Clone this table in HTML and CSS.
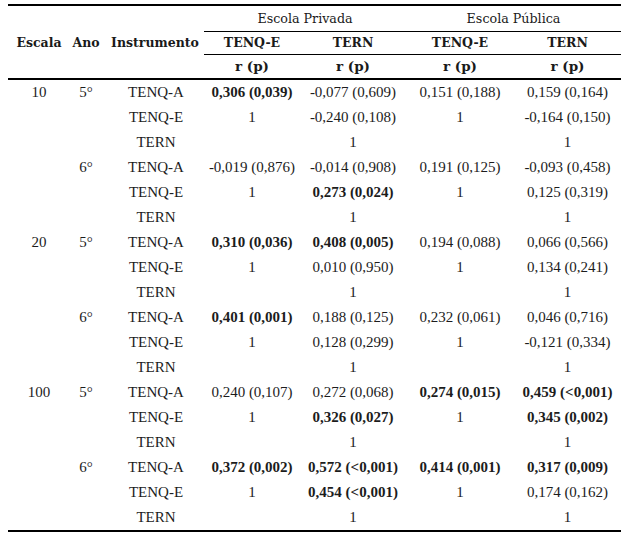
FILE: index.html
```html
<!DOCTYPE html>
<html lang="pt">
<head>
<meta charset="utf-8">
<title>Correlações</title>
<link rel="stylesheet" href="styles.css">
</head>
<body>
<table class="corr">
  <colgroup>
    <col class="c-escala"><col class="c-ano"><col class="c-inst">
    <col class="c-v1"><col class="c-v2"><col class="c-v3"><col class="c-v4">
  </colgroup>
  <thead>
    <tr class="h1">
      <th rowspan="3" class="side">Escala</th>
      <th rowspan="3" class="side">Ano</th>
      <th rowspan="3" class="side inst">Instrumento</th>
      <th colspan="2" class="grp">Escola Privada</th>
      <th colspan="2" class="grp">Escola Pública</th>
    </tr>
    <tr class="h2">
      <th class="sub">TENQ-E</th><th class="sub">TERN</th>
      <th class="sub">TENQ-E</th><th class="sub">TERN</th>
    </tr>
    <tr class="h3">
      <th class="rp">r (p)</th><th class="rp">r (p)</th>
      <th class="rp">r (p)</th><th class="rp">r (p)</th>
    </tr>
  </thead>
  <tbody>
    <tr><td>10</td><td>5°</td><td class="inst">TENQ-A</td><td class="b">0,306 (0,039)</td><td>-0,077 (0,609)</td><td>0,151 (0,188)</td><td>0,159 (0,164)</td></tr>
    <tr><td></td><td></td><td class="inst">TENQ-E</td><td>1</td><td>-0,240 (0,108)</td><td>1</td><td>-0,164 (0,150)</td></tr>
    <tr><td></td><td></td><td class="inst">TERN</td><td></td><td>1</td><td></td><td>1</td></tr>
    <tr><td></td><td>6°</td><td class="inst">TENQ-A</td><td>-0,019 (0,876)</td><td>-0,014 (0,908)</td><td>0,191 (0,125)</td><td>-0,093 (0,458)</td></tr>
    <tr><td></td><td></td><td class="inst">TENQ-E</td><td>1</td><td class="b">0,273 (0,024)</td><td>1</td><td>0,125 (0,319)</td></tr>
    <tr><td></td><td></td><td class="inst">TERN</td><td></td><td>1</td><td></td><td>1</td></tr>
    <tr><td>20</td><td>5°</td><td class="inst">TENQ-A</td><td class="b">0,310 (0,036)</td><td class="b">0,408 (0,005)</td><td>0,194 (0,088)</td><td>0,066 (0,566)</td></tr>
    <tr><td></td><td></td><td class="inst">TENQ-E</td><td>1</td><td>0,010 (0,950)</td><td>1</td><td>0,134 (0,241)</td></tr>
    <tr><td></td><td></td><td class="inst">TERN</td><td></td><td>1</td><td></td><td>1</td></tr>
    <tr><td></td><td>6°</td><td class="inst">TENQ-A</td><td class="b">0,401 (0,001)</td><td>0,188 (0,125)</td><td>0,232 (0,061)</td><td>0,046 (0,716)</td></tr>
    <tr><td></td><td></td><td class="inst">TENQ-E</td><td>1</td><td>0,128 (0,299)</td><td>1</td><td>-0,121 (0,334)</td></tr>
    <tr><td></td><td></td><td class="inst">TERN</td><td></td><td>1</td><td></td><td>1</td></tr>
    <tr><td>100</td><td>5°</td><td class="inst">TENQ-A</td><td>0,240 (0,107)</td><td>0,272 (0,068)</td><td class="b">0,274 (0,015)</td><td class="b">0,459 (&lt;0,001)</td></tr>
    <tr><td></td><td></td><td class="inst">TENQ-E</td><td>1</td><td class="b">0,326 (0,027)</td><td>1</td><td class="b">0,345 (0,002)</td></tr>
    <tr><td></td><td></td><td class="inst">TERN</td><td></td><td>1</td><td></td><td>1</td></tr>
    <tr><td></td><td>6°</td><td class="inst">TENQ-A</td><td class="b">0,372 (0,002)</td><td class="b">0,572 (&lt;0,001)</td><td class="b">0,414 (0,001)</td><td class="b">0,317 (0,009)</td></tr>
    <tr><td></td><td></td><td class="inst">TENQ-E</td><td>1</td><td class="b">0,454 (&lt;0,001)</td><td>1</td><td>0,174 (0,162)</td></tr>
    <tr><td></td><td></td><td class="inst">TERN</td><td></td><td>1</td><td></td><td>1</td></tr>
  </tbody>
</table>
</body>
</html>
```

FILE: styles.css
```css
html, body {
  background: #ffffff;
}
body {
  margin: 4px 7px 0 8px;
  font-family: "Liberation Serif", "Times New Roman", serif;
  color: #1c1c1c;
}
.corr {
  width: 613px;
  table-layout: fixed;
  border-collapse: collapse;
  border-top: 2px solid #000;
  border-bottom: 2px solid #000;
}
.c-escala { width: 62px; }
.c-ano { width: 32px; }
.c-inst { width: 102px; }
.c-v1 { width: 96px; }
.c-v2 { width: 106px; }
.c-v3 { width: 108px; }
.c-v4 { width: 107px; }

.corr th {
  font-family: "DejaVu Serif", serif;
  font-size: 12.5px;
  font-weight: normal;
  color: #1a1a1a;
  padding: 0;
  text-align: center;
  vertical-align: middle;
  white-space: nowrap;
}
.corr th.side {
  font-weight: bold;
  border-bottom: 2px solid #000;
}
.corr th.inst {
  padding-left: 4px;
}
.corr th.grp {
  font-size: 12.7px;
  border-bottom: 1px solid #000;
}
.corr th.sub {
  font-weight: bold;
  font-size: 12.5px;
  border-bottom: 1px solid #000;
}
.corr th.rp {
  font-weight: bold;
  font-size: 13.5px;
  border-bottom: 2px solid #000;
}
.h1 { height: 26px; }
.h2 { height: 23px; }
.h3 { height: 25px; }

.corr td {
  height: 25px;
  padding: 0;
  font-size: 15px;
  text-align: center;
  vertical-align: middle;
  white-space: nowrap;
}
.corr td.inst {
  padding-left: 6px;
}
.corr td.b {
  font-weight: bold;
}
```
